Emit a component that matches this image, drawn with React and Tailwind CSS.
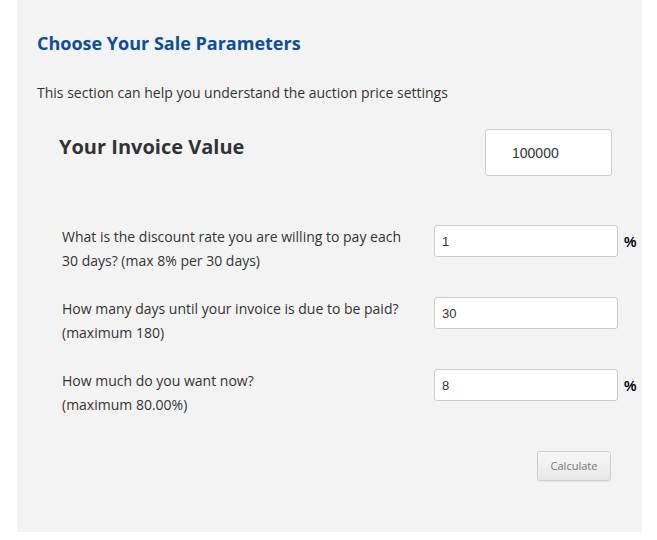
export default function App() {
  const rows = [
    { label: ['What is the discount rate you are willing to pay each', '30 days? (max 8% per 30 days)'], value: '1', pct: true },
    { label: ['How many days until your invoice is due to be paid?', '(maximum 180)'], value: '30', pct: false },
    { label: ['How much do you want now?', '(maximum 80.00%)'], value: '8', pct: true },
  ];

  return (
    <div className="w-[657px] h-[540px] bg-white font-['Open_Sans',sans-serif]">
      <div className="ml-[17px] w-[625px] h-[532px] bg-[#f3f3f3] pl-[20px] pr-[30px] pt-[31px] flex flex-col">
        <h2 className="text-[18px] leading-[24px] font-bold text-[#0b4f9c]">Choose Your Sale Parameters</h2>
        <p className="mt-[28px] text-[14px] leading-[20px] text-[#333]">
          This section can help you understand the auction price settings
        </p>

        {/* Invoice value */}
        <div className="mt-[26px] flex items-start justify-between">
          <h3 className="ml-[22px] mt-[4px] text-[20px] leading-[28px] font-bold text-[#333]">Your Invoice Value</h3>
          <input
            readOnly
            value="100000"
            className="w-[127px] h-[47px] bg-white border border-[#ccc] rounded-[3px] pl-[26px] text-[14px] text-[#333] font-['Liberation_Sans',Arial,sans-serif] outline-none"
          />
        </div>

        {/* Parameters */}
        <div className="mt-[49px] flex flex-col gap-[24px]">
          {rows.map((r, i) => (
            <div key={i} className="flex items-start">
              <p className="ml-[25px] w-[372px] shrink-0 text-[14px] leading-[24px] text-[#333]">
                {r.label[0]}<br />{r.label[1]}
              </p>
              <input
                readOnly
                value={r.value}
                className="w-[184px] h-[32px] shrink-0 bg-white border border-[#ccc] rounded-[3px] pl-[7px] text-[13px] text-[#333] font-['Liberation_Sans',Arial,sans-serif] outline-none"
              />
              {r.pct && (
                <span className="ml-[6px] mt-[9px] text-[14px] leading-[16px] font-bold text-black font-['Liberation_Sans',Arial,sans-serif]">%</span>
              )}
            </div>
          ))}
        </div>

        <div className="mt-[34px] flex justify-end">
          <button className="w-[74px] h-[30px] mr-[1px] rounded-[3px] border border-[#ccc] bg-gradient-to-b from-[#f7f7f7] to-[#e8e8e8] text-[11px] text-[#777] shadow-[0_1px_1px_rgba(0,0,0,0.05)]">
            Calculate
          </button>
        </div>
      </div>
    </div>
  );
}
